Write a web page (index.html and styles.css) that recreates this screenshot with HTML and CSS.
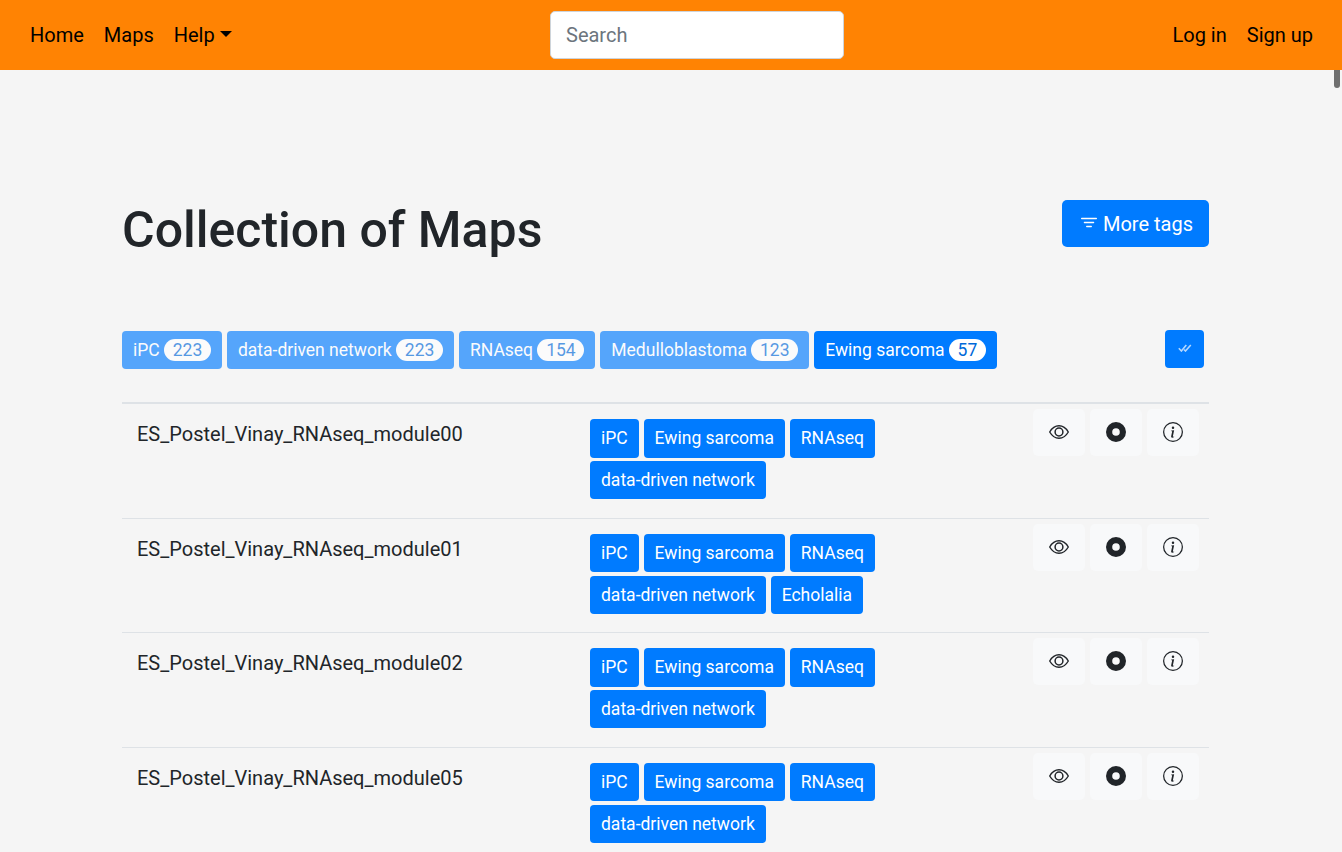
FILE: index.html
```
<!DOCTYPE html>
<html lang="en">
<head>
<meta charset="utf-8">
<title>Collection of Maps</title>
<link rel="stylesheet" href="styles.css">
</head>
<body>
<svg class="sprite" aria-hidden="true">
  <symbol id="eye" viewBox="0 0 20 20"><path d="M.7 10C3 6 6.300 3.750 10 3.750S17 6 19.300 10C17 14 13.700 16.250 10 16.250S3 14 .7 10Z" fill="none" stroke="currentColor" stroke-width="1.400" stroke-linejoin="round"/><circle cx="10" cy="10" r="3.900" fill="none" stroke="currentColor" stroke-width="1.500"/></symbol>
  <symbol id="disc" viewBox="0 0 20 20"><circle cx="10" cy="10" r="6.900" fill="none" stroke="currentColor" stroke-width="6.200"/></symbol>
  <symbol id="info" viewBox="0 0 16 16"><path fill="currentColor" d="M8 15A7 7 0 1 1 8 1a7 7 0 0 1 0 14zm0 1A8 8 0 1 0 8 0a8 8 0 0 0 0 16z"/><path fill="currentColor" d="m8.930 6.588-2.290.287-.082.380.450.083c.294.070.352.176.288.469l-.738 3.468c-.194.897.105 1.319.808 1.319.545 0 1.178-.252 1.465-.598l.088-.416c-.2.176-.492.246-.686.246-.275 0-.375-.193-.304-.533L8.930 6.588zM9 4.500a1 1 0 1 1-2 0 1 1 0 0 1 2 0z"/></symbol>
</svg>
<header class="navbar">
  <nav class="nav"><a>Home</a><a>Maps</a><a class="dropdown">Help</a></nav>
  <input class="search" type="text" placeholder="Search">
  <nav class="nav nav-end"><a>Log in</a><a>Sign up</a></nav>
</header>
<span class="scroll-thumb"></span>
<main class="container">
  <div class="heading">
    <h1>Collection of Maps</h1>
    <button class="btn btn-more"><svg class="filter-icon" viewBox="0 0 16 12"><path d="M.6 1.500h14.800M3.400 5.500h9.200M5.700 9.500h4.600" stroke="currentColor" stroke-width="1.300" stroke-linecap="round"/></svg>More tags</button>
  </div>
  <div class="filters">
    <div class="tags">
      <button class="btn tag muted">iPC <span class="badge">223</span></button>
      <button class="btn tag muted">data-driven network <span class="badge">223</span></button>
      <button class="btn tag muted">RNAseq <span class="badge">154</span></button>
      <button class="btn tag muted">Medulloblastoma <span class="badge">123</span></button>
      <button class="btn tag">Ewing sarcoma <span class="badge">57</span></button>
    </div>
    <button class="btn btn-check" aria-label="All tags"><svg class="check-icon" viewBox="0 0 14 8"><path d="M.8 4.300 3.400 7 8.300 1M6.100 5.700 7.500 7 12.800 1" fill="none" stroke="currentColor" stroke-width="1.600"/></svg></button>
  </div>
  <section class="map-list">
    <article class="row">
      <div class="name">ES_Postel_Vinay_RNAseq_module00</div>
      <div class="row-tags"><button class="btn tag">iPC</button><button class="btn tag">Ewing sarcoma</button><button class="btn tag">RNAseq</button><button class="btn tag">data-driven network</button></div>
      <div class="actions"><button class="action"><svg><use href="#eye"/></svg></button><button class="action"><svg><use href="#disc"/></svg></button><button class="action"><svg><use href="#info"/></svg></button></div>
    </article>
    <article class="row">
      <div class="name">ES_Postel_Vinay_RNAseq_module01</div>
      <div class="row-tags"><button class="btn tag">iPC</button><button class="btn tag">Ewing sarcoma</button><button class="btn tag">RNAseq</button><button class="btn tag">data-driven network</button><button class="btn tag">Echolalia</button></div>
      <div class="actions"><button class="action"><svg><use href="#eye"/></svg></button><button class="action"><svg><use href="#disc"/></svg></button><button class="action"><svg><use href="#info"/></svg></button></div>
    </article>
    <article class="row">
      <div class="name">ES_Postel_Vinay_RNAseq_module02</div>
      <div class="row-tags"><button class="btn tag">iPC</button><button class="btn tag">Ewing sarcoma</button><button class="btn tag">RNAseq</button><button class="btn tag">data-driven network</button></div>
      <div class="actions"><button class="action"><svg><use href="#eye"/></svg></button><button class="action"><svg><use href="#disc"/></svg></button><button class="action"><svg><use href="#info"/></svg></button></div>
    </article>
    <article class="row">
      <div class="name">ES_Postel_Vinay_RNAseq_module05</div>
      <div class="row-tags"><button class="btn tag">iPC</button><button class="btn tag">Ewing sarcoma</button><button class="btn tag">RNAseq</button><button class="btn tag">data-driven network</button></div>
      <div class="actions"><button class="action"><svg><use href="#eye"/></svg></button><button class="action"><svg><use href="#disc"/></svg></button><button class="action"><svg><use href="#info"/></svg></button></div>
    </article>
  </section>
</main>
</body>
</html>
```

FILE: styles.css
```
* { box-sizing: border-box; }
html { height: 100%; overflow: hidden; }
body {
  margin: 0;
  height: 100%;
  overflow: hidden;
  background: #f5f5f5;
  color: #212529;
  font: 400 20px/1.5 Roboto, sans-serif;
}
button, input { font: inherit; margin: 0; }
button { border: 0; }
.sprite { display: none; }
.navbar {
  height: 70px;
  padding: 0 29px 0 30px;
  background: #ff8303;
  color: #000;
  display: grid;
  grid-template-columns: 520px 294px 1fr;
  align-items: center;
}
.nav { display: flex; gap: 20px; }
.nav-end { justify-content: flex-end; }
.dropdown::after {
  content: "";
  display: inline-block;
  margin-left: 5px;
  vertical-align: 5px;
  border: 6px solid transparent;
  border-top-color: #000;
  border-bottom: 0;
}
.search {
  width: 294px;
  height: 48px;
  padding: 7px 15px;
  border: 1px solid #ced4da;
  border-radius: 5px;
  background: #fff;
}
.search::placeholder { color: #6c757d; opacity: 1; }
.scroll-thumb {
  position: absolute;
  top: 70px;
  right: 2px;
  width: 6px;
  height: 18px;
  background: #6f6f6f;
  border-radius: 0 0 3px 3px;
}
.container { width: 1087px; margin-left: 122px; padding-top: 130px; }
.heading { display: flex; justify-content: space-between; align-items: flex-start; height: 131px; }
h1 { margin: 0; font-size: 50px; font-weight: 500; line-height: 60px; }
.btn { background: #007bff; color: #fff; border-radius: 4px; white-space: nowrap; }
.btn-more { width: 147px; height: 47px; padding: 0 16px 0 19px; border-radius: 5px; display: flex; align-items: center; justify-content: space-between; }
.filter-icon { width: 16px; height: 12px; margin-bottom: 1px; }
.filters { display: flex; justify-content: space-between; height: 71px; padding-right: 5px; }
.tags { display: flex; gap: 4.9px; }
.tag { font-size: 17.5px; line-height: 26.25px; height: 38.25px; padding: 6px 11px; }
.muted { opacity: .65; }
.badge {
  display: inline-block;
  padding: 2px 8.75px;
  border-radius: 11px;
  background: #fff;
  color: #0069d9;
  line-height: 18px;
}
.btn-check { width: 39px; height: 38px; margin-top: -1px; padding: 0; display: flex; align-items: center; justify-content: center; }
.check-icon { width: 14px; height: 8px; margin-bottom: 2px; opacity: .7; }
.row {
  height: 114.5px;
  border-top: 1px solid #dee2e6;
  display: grid;
  grid-template-columns: 468px 1fr auto;
}
.row:first-child { height: 115.5px; border-top-width: 2px; }
.name { padding: 15px; }
.row-tags {
  width: 330px;
  padding-top: 15.45px;
  display: flex;
  flex-wrap: wrap;
  align-content: flex-start;
  gap: 3.4px 4.9px;
}
.actions { display: flex; gap: 5px; padding: 5px 10px 0 0; }
.action {
  width: 52px;
  height: 47px;
  padding: 0 0 1px;
  border-radius: 5px;
  background: #f8f9fa;
  color: #212529;
  display: flex;
  align-items: center;
  justify-content: center;
}
.action svg { width: 20px; height: 20px; }
```
